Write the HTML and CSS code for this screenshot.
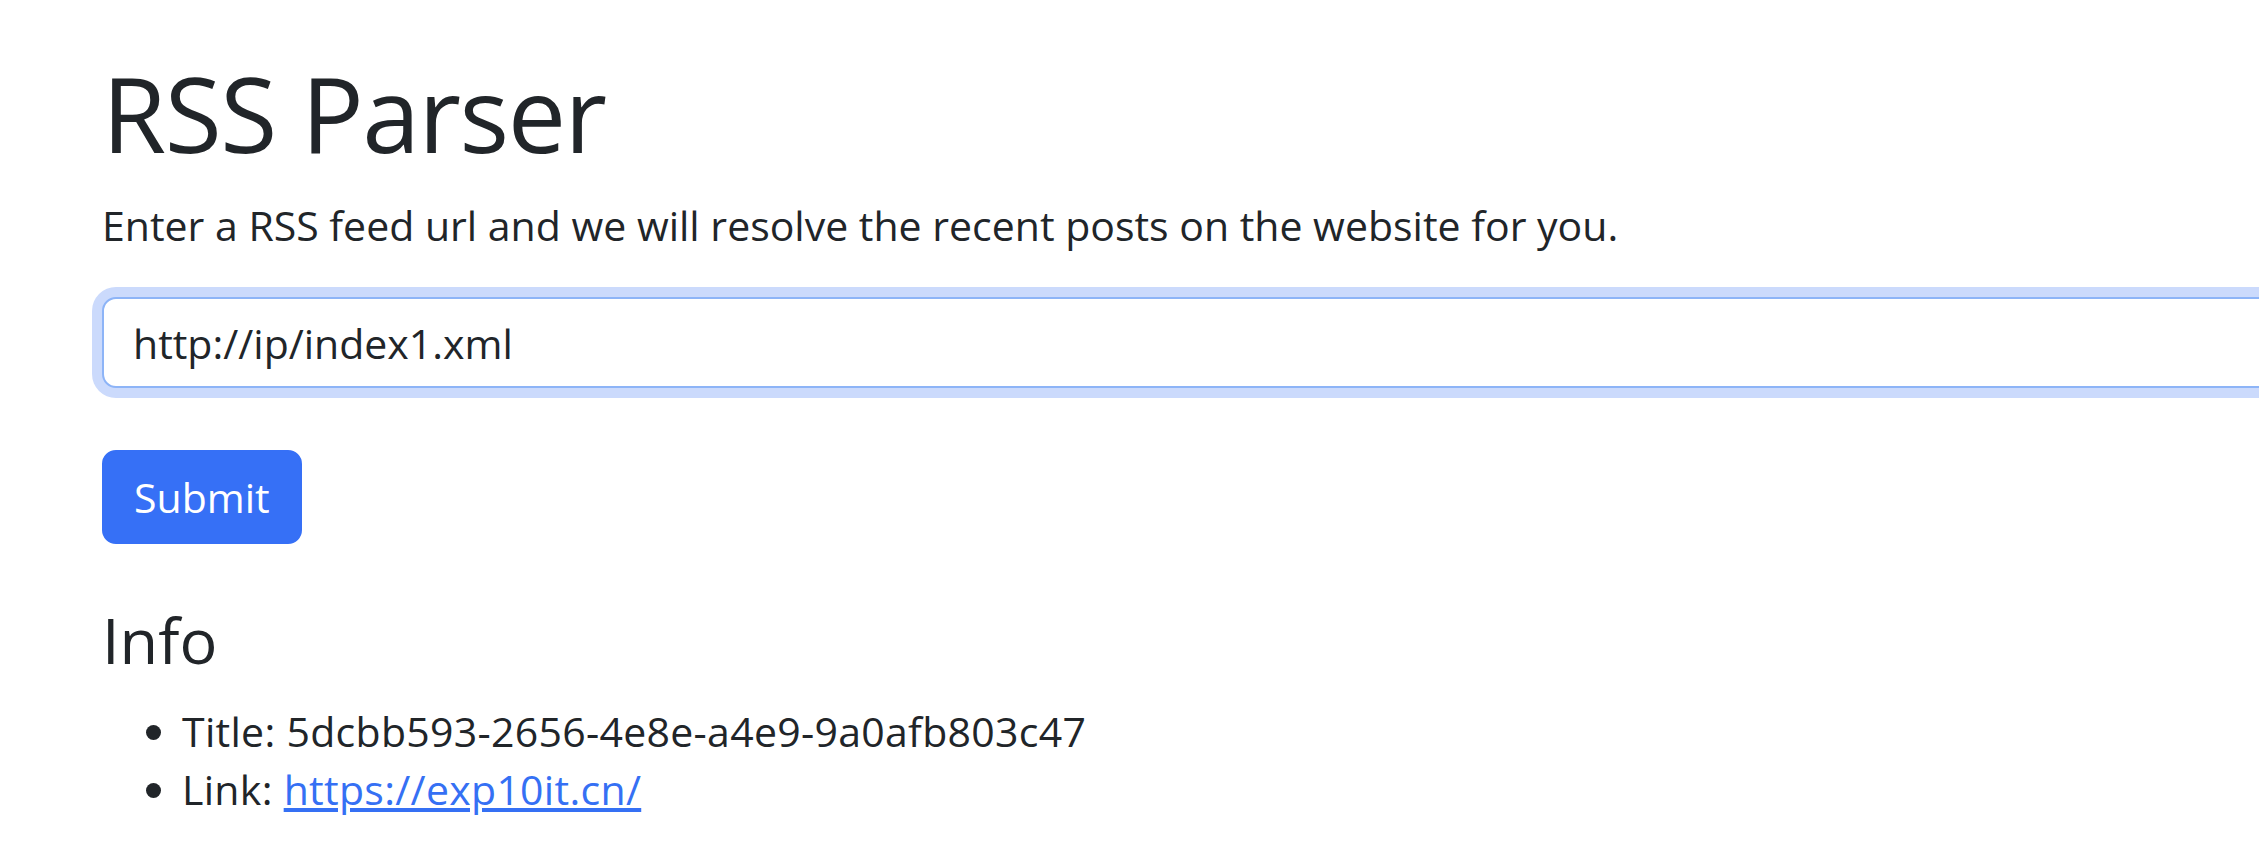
FILE: index.html
```html
<!DOCTYPE html>
<html lang="en">
<head>
<meta charset="utf-8">
<title>RSS Parser</title>
<link rel="stylesheet" href="styles.css">
</head>
<body>
<main class="page">
  <h1 class="title">RSS Parser</h1>
  <p class="lead-text">Enter a RSS feed url and we will resolve the recent posts on the website for you.</p>
  <form class="feed-form">
    <input class="url-input" type="text" value="http://ip/index1.xml">
    <button class="submit-btn" type="button">Submit</button>
  </form>
  <h3 class="section-title">Info</h3>
  <ul class="info-list">
    <li>Title: 5dcbb593-2656-4e8e-a4e9-9a0afb803c47</li>
    <li>Link: <a class="info-link" href="#">https://exp10it.cn/</a></li>
  </ul>
</main>
</body>
</html>
```
FILE: styles.css
```css
html, body {
  margin: 0;
  padding: 0;
  overflow: hidden;
  background: #ffffff;
}

body {
  font-family: "Open Sans", "Noto Sans", "Liberation Sans", sans-serif;
  font-size: 41px;
  line-height: 57.6px;
  color: #212529;
}

.page {
  width: 2300px;
  padding: 51px 0 0 102px;
  box-sizing: border-box;
}

.title {
  margin: 0 0 21px;
  font-size: 104px;
  font-weight: 400;
  line-height: 1.2;
  letter-spacing: -1.5px;
}

.lead-text {
  margin: 0 0 43px;
}

.feed-form {
  display: flex;
  flex-direction: column;
  align-items: flex-start;
  gap: 62px;
}

.url-input {
  width: 100%;
  box-sizing: border-box;
  height: 91px;
  padding: 0 29px;
  font: inherit;
  color: #212529;
  background: #ffffff;
  border: 2px solid #8db4f7;
  border-radius: 14px;
  box-shadow: 0 0 0 10px #cbdafc;
  outline: none;
}

.submit-btn {
  height: 94px;
  padding: 0 30px;
  font: inherit;
  color: #ffffff;
  background: #3670f6;
  border: 2px solid #3670f6;
  border-radius: 14px;
}

.section-title {
  margin: 58px 0 25px;
  font-size: 63px;
  font-weight: 400;
  line-height: 1.2;
}

.info-list {
  margin: 0;
  padding-left: 80px;
  letter-spacing: 0.3px;
}

.info-link {
  color: #3570f4;
  text-decoration: underline;
}
```
